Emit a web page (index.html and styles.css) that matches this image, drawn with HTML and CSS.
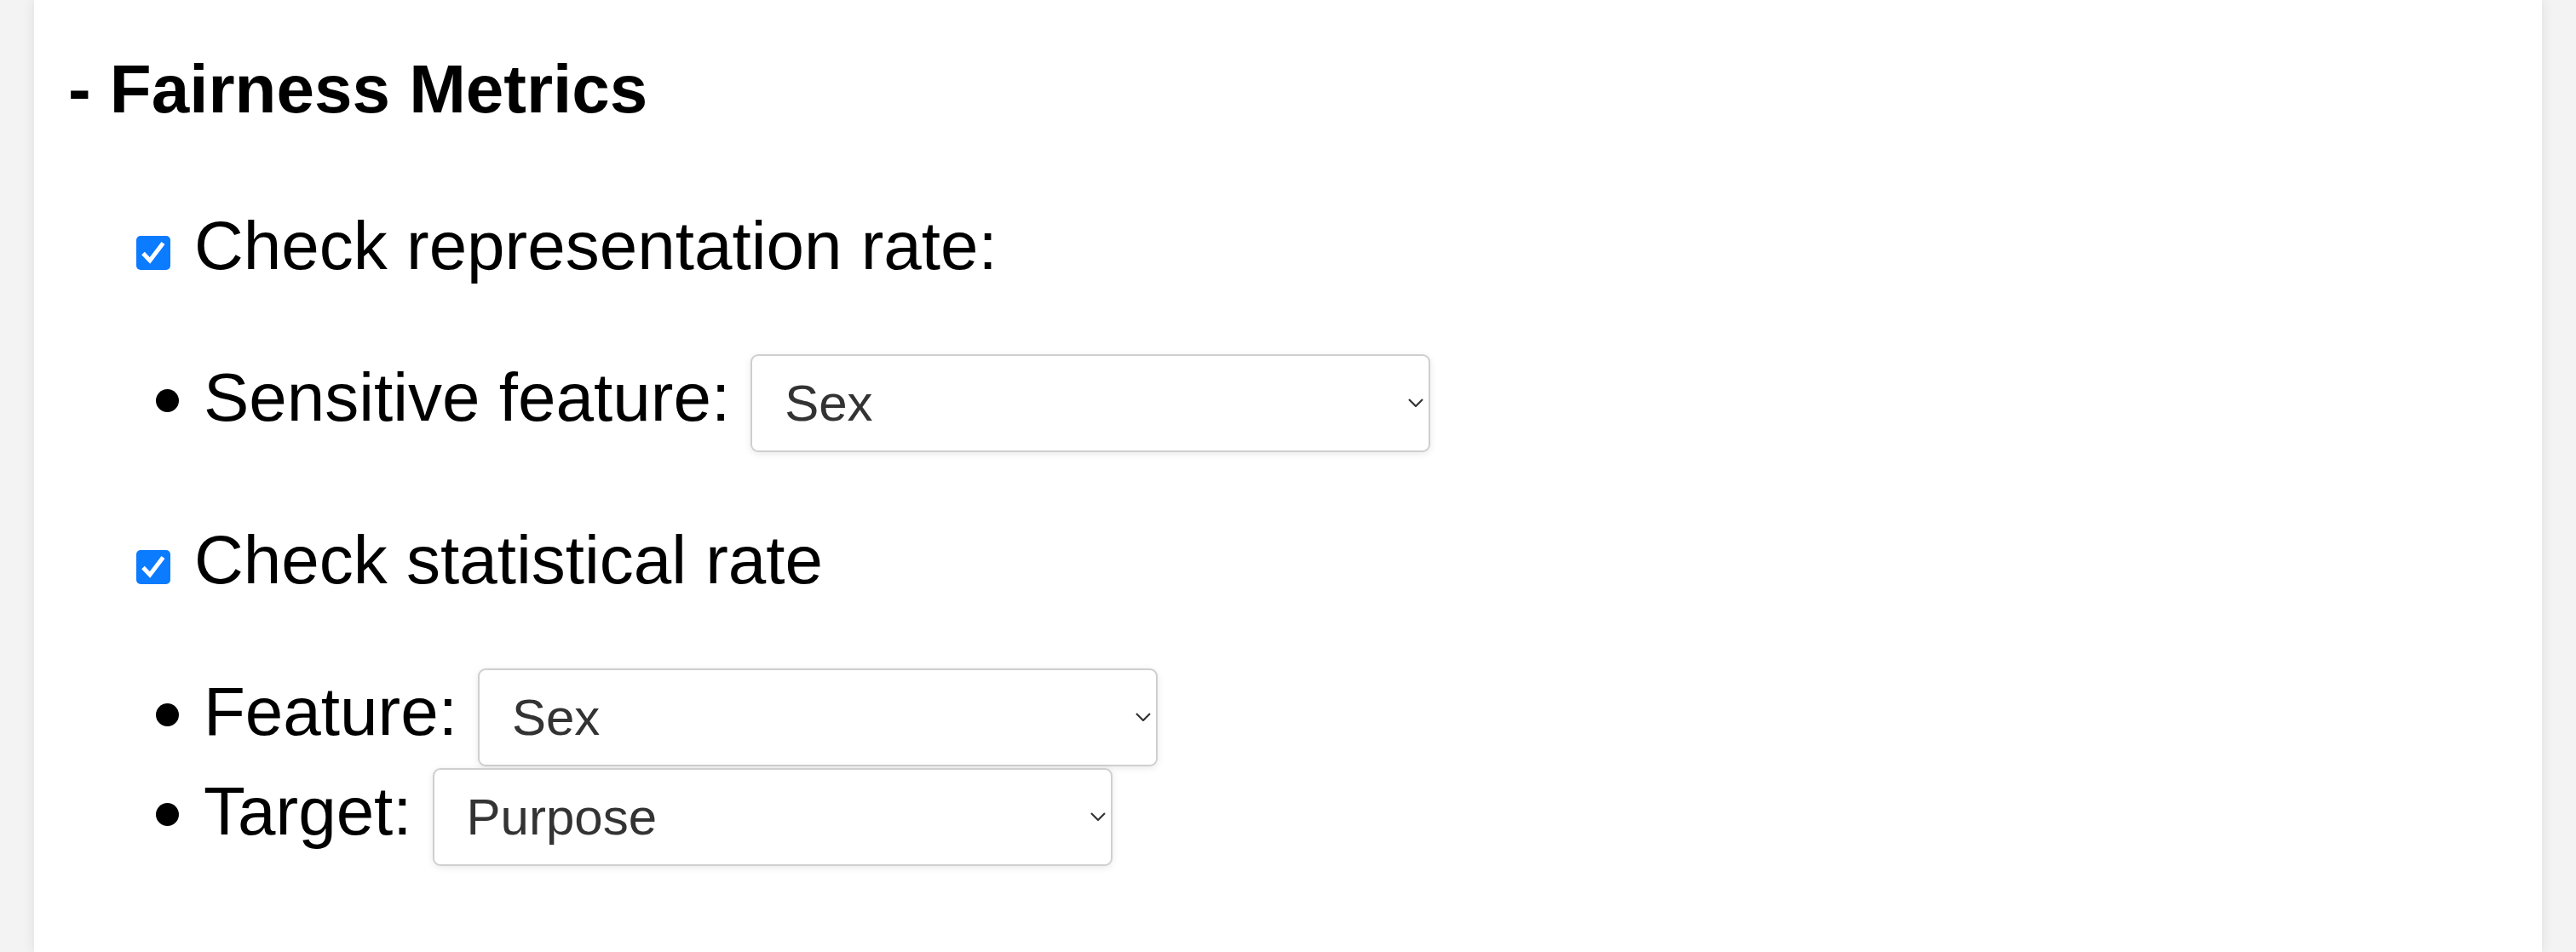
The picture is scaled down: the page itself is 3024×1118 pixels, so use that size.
FILE: index.html
```html
<!DOCTYPE html>
<html lang="en">
<head>
<meta charset="utf-8">
<title>Fairness Metrics</title>
<link rel="stylesheet" href="styles.css">
</head>
<body>
<main class="panel">
  <h3 class="heading">- Fairness Metrics</h3>

  <label class="check-row">
    <span class="checkbox" role="checkbox" aria-checked="true">
      <svg class="checkmark" viewBox="0 0 40 40" width="40" height="40"><path d="M8 20.5 L16 29 L31.5 8.5" /></svg>
    </span>
    <span class="check-label">Check representation rate:</span>
  </label>

  <ul class="options">
    <li class="option">
      <span class="bullet"></span>
      <span class="option-label">Sensitive feature:</span>
      <span class="select-wrap">
        <select class="select"><option>Sex</option></select>
        <svg class="chevron" viewBox="0 0 18 10" width="18" height="10"><path d="M1 1 L9 9 L17 1" /></svg>
      </span>
    </li>
  </ul>

  <label class="check-row">
    <span class="checkbox" role="checkbox" aria-checked="true">
      <svg class="checkmark" viewBox="0 0 40 40" width="40" height="40"><path d="M8 20.5 L16 29 L31.5 8.5" /></svg>
    </span>
    <span class="check-label">Check statistical rate</span>
  </label>

  <ul class="options">
    <li class="option">
      <span class="bullet"></span>
      <span class="option-label">Feature:</span>
      <span class="select-wrap">
        <select class="select"><option>Sex</option></select>
        <svg class="chevron" viewBox="0 0 18 10" width="18" height="10"><path d="M1 1 L9 9 L17 1" /></svg>
      </span>
    </li>
    <li class="option">
      <span class="bullet"></span>
      <span class="option-label">Target:</span>
      <span class="select-wrap">
        <select class="select"><option>Purpose</option></select>
        <svg class="chevron" viewBox="0 0 18 10" width="18" height="10"><path d="M1 1 L9 9 L17 1" /></svg>
      </span>
    </li>
  </ul>
</main>
</body>
</html>
```

FILE: styles.css
```css
html, body {
  margin: 0;
  padding: 0;
}

body {
  background: #f3f3f3;
  font-family: "Liberation Sans", Arial, Helvetica, sans-serif;
  color: #000;
}

.panel {
  margin: 0 40px;
  min-height: 1118px;
  background: #fff;
  box-shadow: 0 0 14px rgba(0, 0, 0, 0.09);
  padding: 0 0 0 38px;
  display: flex;
  flex-direction: column;
  align-items: flex-start;
}

.heading {
  margin: 59px 0 0 2px;
  font-size: 80px;
  line-height: 92px;
  font-weight: bold;
}

.check-row {
  display: flex;
  align-items: flex-start;
  margin-top: 92px;
  padding-left: 82px;
  font-size: 80px;
  line-height: 92px;
}

.options + .check-row {
  margin-top: 81px;
}

.checkbox {
  width: 40px;
  height: 40px;
  margin-top: 34px;
  margin-right: 28px;
  background: #0b7bff;
  border-radius: 5px;
  flex: none;
}

.checkmark {
  display: block;
}

.checkmark path {
  fill: none;
  stroke: #fff;
  stroke-width: 5;
  stroke-linejoin: miter;
}

.options {
  list-style: none;
  margin: 81px 0 0 0;
  padding: 0 0 0 105px;
  display: flex;
  flex-direction: column;
  gap: 2px;
}

.option {
  display: flex;
  align-items: flex-start;
  height: 115px;
  font-size: 80px;
  line-height: 92px;
}

.bullet {
  width: 27px;
  height: 27px;
  border-radius: 50%;
  background: #000;
  margin-top: 41px;
  margin-right: 29px;
  flex: none;
}

.option-label {
  margin-top: 5px;
  margin-right: 24px;
  white-space: nowrap;
}

.select-wrap {
  position: relative;
  display: block;
  flex: none;
}

.select {
  display: block;
  appearance: none;
  -webkit-appearance: none;
  box-sizing: border-box;
  width: 798px;
  height: 115px;
  margin: 0;
  padding: 0 36px 0 38px;
  border: 2px solid #cfcfcf;
  border-radius: 9px;
  background: #fff;
  box-shadow: 0 2px 8px rgba(0, 0, 0, 0.09);
  font-family: "Liberation Sans", Arial, Helvetica, sans-serif;
  font-size: 60px;
  color: #333;
}

.chevron {
  position: absolute;
  right: 8px;
  top: 52px;
  pointer-events: none;
}

.chevron path {
  fill: none;
  stroke: #333;
  stroke-width: 2.2;
}
```
